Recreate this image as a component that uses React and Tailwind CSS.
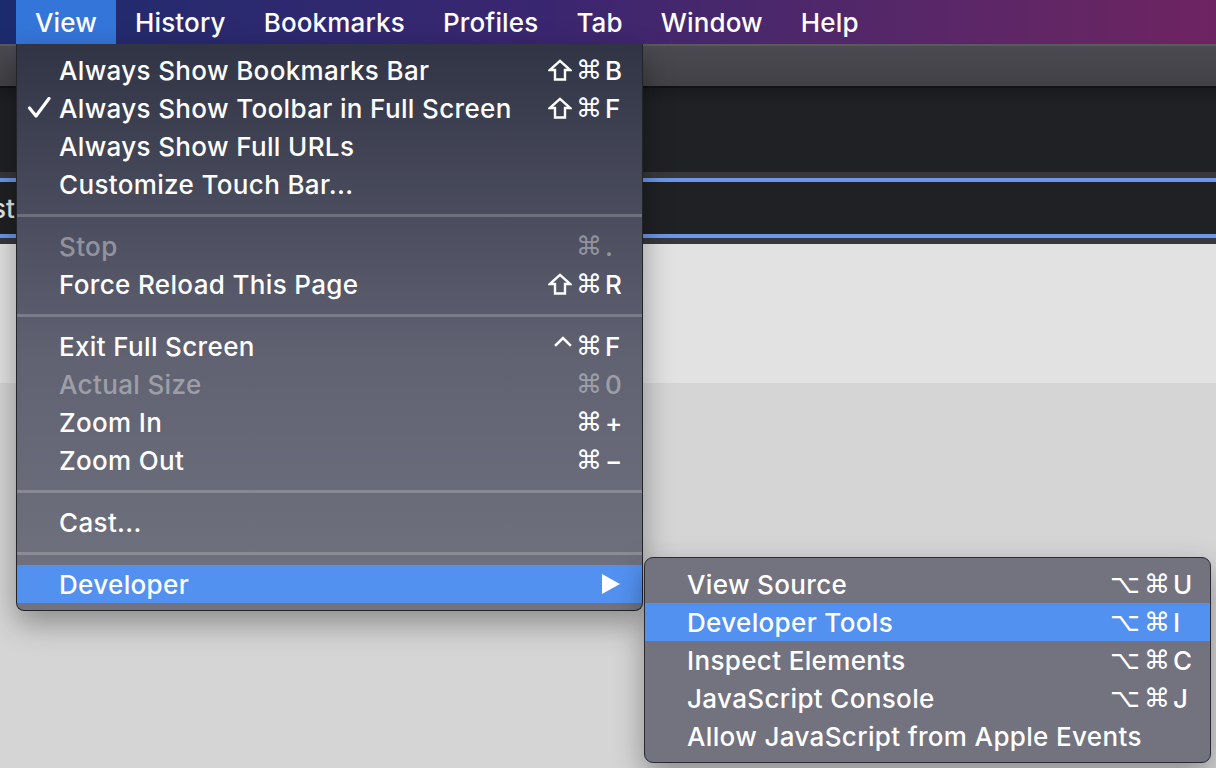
import React from 'react';

const MENU_BAR = ['View', 'History', 'Bookmarks', 'Profiles', 'Tab', 'Window', 'Help'];

const MAIN_ITEMS = [
  { label: 'Always Show Bookmarks Bar', mods: '⇧⌘', k: 'B' },
  { label: 'Always Show Toolbar in Full Screen', mods: '⇧⌘', k: 'F', checked: true },
  { label: 'Always Show Full URLs' },
  { label: 'Customize Touch Bar...' },
  'sep',
  { label: 'Stop', mods: '⌘', k: '.', disabled: true },
  { label: 'Force Reload This Page', mods: '⇧⌘', k: 'R' },
  'sep',
  { label: 'Exit Full Screen', mods: '⌃⌘', k: 'F' },
  { label: 'Actual Size', mods: '⌘', k: '0', disabled: true },
  { label: 'Zoom In', mods: '⌘', k: '+' },
  { label: 'Zoom Out', mods: '⌘', k: '−' },
  'sep',
  { label: 'Cast...' },
  'sep',
  { label: 'Developer', submenu: true, active: true },
];

const SUB_ITEMS = [
  { label: 'View Source', mods: '⌥⌘', k: 'U' },
  { label: 'Developer Tools', mods: '⌥⌘', k: 'I', active: true },
  { label: 'Inspect Elements', mods: '⌥⌘', k: 'C' },
  { label: 'JavaScript Console', mods: '⌥⌘', k: 'J' },
  { label: 'Allow JavaScript from Apple Events' },
];

// check mark drawn to match the macOS glyph
const CheckIcon = () => (
  <svg width="24" height="22" viewBox="0 0 24 22" fill="none" stroke="currentColor" strokeWidth="3.2" strokeLinecap="round" strokeLinejoin="round">
    <path d="M2.5 11 L9 19 L22 1.5" />
  </svg>
);

// shift key symbol (outlined up arrow)
const ShiftIcon = () => (
  <svg width="24" height="22" viewBox="0 0 24 22" fill="none" stroke="currentColor" strokeWidth="2.4" strokeLinejoin="miter">
    <path d="M12 1.8 L22.2 11 L17 11 L17 20.5 L7 20.5 L7 11 L1.8 11 Z" />
  </svg>
);

// control key symbol (caret)
const CtrlIcon = () => (
  <svg width="18" height="22" viewBox="0 0 18 22" fill="none" stroke="currentColor" strokeWidth="2.6" strokeLinecap="square">
    <path d="M2 10 L9 3 L16 10" />
  </svg>
);

const SubArrow = () => (
  <svg width="18" height="20" viewBox="0 0 18 20" className="mr-[5px]">
    <path d="M0 0 L18 10 L0 20 Z" fill="white" />
  </svg>
);

function Shortcut({ mods, k }) {
  return (
    <span className="flex items-center whitespace-nowrap tracking-normal">
      <span className="flex items-center gap-[4px] pr-[3px] font-['DejaVu_Sans',sans-serif]">
        {mods.split('').map((c, i) =>
          c === '⇧' ? <ShiftIcon key={i} /> : c === '⌃' ? <CtrlIcon key={i} /> : <span key={i}>{c}</span>
        )}
      </span>
      <span className="w-[20px]">{k}</span>
    </span>
  );
}

function MenuRow({ item }) {
  return (
    <div
      className={`flex items-center h-[38px] pr-[17px] ${item.active ? 'bg-[#5391f1]' : ''} ${
        item.disabled ? 'text-white/40' : 'text-white'
      }`}
    >
      <div className="w-[42px] shrink-0 pl-[10px] flex items-center">{item.checked && <CheckIcon />}</div>
      <span className="flex-1 whitespace-nowrap tracking-[0.35px]">{item.label}</span>
      {item.k && <Shortcut mods={item.mods} k={item.k} />}
      {item.submenu && <SubArrow />}
    </div>
  );
}

const Separator = () => (
  <div className="h-[24px] pt-[11px]">
    <div className="h-[3px] bg-white/20" />
  </div>
);

export default function App() {
  return (
    <div className="relative w-[1216px] h-[768px] overflow-hidden bg-[#d5d5d5] font-['Inter',sans-serif] font-medium text-[26px] antialiased">
      {/* menu bar */}
      <div className="h-[44px] flex pl-[16px] bg-linear-to-r from-[#1c2b6e] via-[#3a2670] via-45% to-[#6e2361] text-white tracking-[0.15px]">
        {MENU_BAR.map((m, i) => (
          <div key={m} className={`h-full flex items-center px-[19px] ${i === 0 ? 'bg-[#3475d9]' : ''}`}>
            {m}
          </div>
        ))}
      </div>

      {/* browser window behind the menu */}
      <div className="h-[2px] bg-[#5a595e]" />
      <div className="h-[40px] bg-linear-to-b from-[#4b4a50] to-[#424146]" />
      <div className="h-[2px] bg-[#121214]" />
      <div className="h-[84px] bg-linear-to-b from-[#1a1b1e] to-[#202124] to-20%" />
      <div className="h-[6px] bg-[#37373c]" />
      <div className="h-[4px] bg-[#6a97e8]" />
      <div className="h-[52px] bg-[#202124] flex items-center overflow-hidden">
        <span className="ml-[-8px] text-[#e8e8e8] whitespace-nowrap">st</span>
      </div>
      <div className="h-[4px] bg-[#6a97e8]" />
      <div className="h-[6px] bg-[#37373c]" />
      <div className="h-[139px] bg-[#e2e2e2]" />

      {/* View menu */}
      <div className="absolute top-[44px] left-[16px] w-[627px] py-[7px] border-x border-b border-[#23232a] rounded-b-[8px] overflow-hidden bg-linear-to-b from-[#313445] via-[#606272] via-55% to-[#72737f] shadow-[0_12px_30px_rgba(0,0,0,0.35)]">
        {MAIN_ITEMS.map((item, i) => (item === 'sep' ? <Separator key={i} /> : <MenuRow key={i} item={item} />))}
      </div>

      {/* Developer submenu */}
      <div className="absolute top-[557px] left-[644px] w-[567px] py-[7px] border border-[#2a2a30] rounded-[9px] overflow-hidden bg-[#73727f] shadow-[0_12px_30px_rgba(0,0,0,0.35)]">
        {SUB_ITEMS.map((item, i) => (
          <MenuRow key={i} item={item} />
        ))}
      </div>
    </div>
  );
}
